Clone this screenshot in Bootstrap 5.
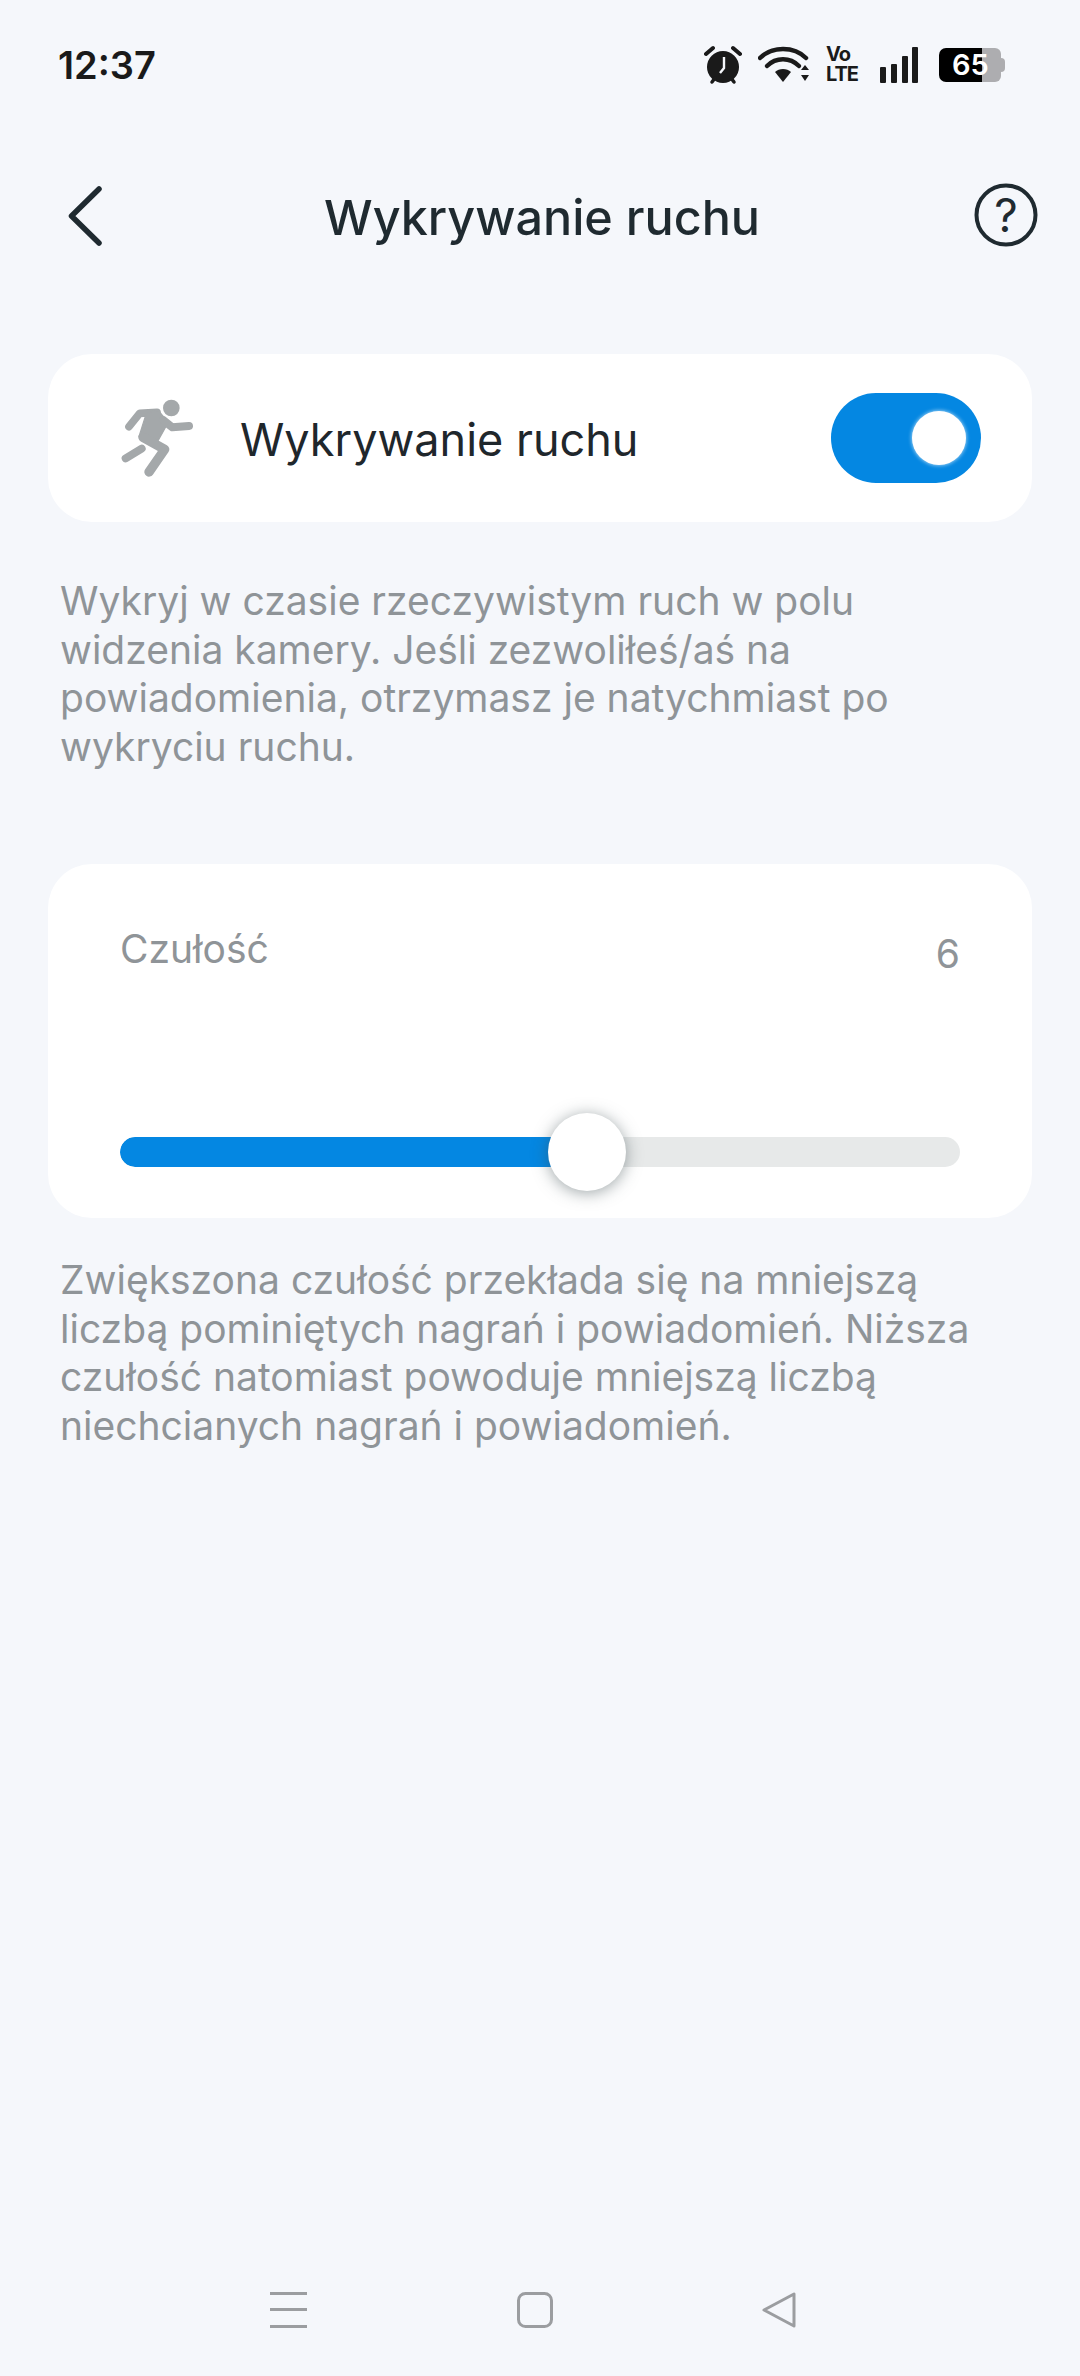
<!DOCTYPE html>
<html lang="pl">
<head>
<meta charset="utf-8">
<title>Wykrywanie ruchu</title>
<link href="https://cdn.jsdelivr.net/npm/bootstrap@5.3.0/dist/css/bootstrap.min.css" rel="stylesheet">
<style>
html,body{width:1080px;height:2376px;overflow:hidden}
body{background:#f5f7fb;font-family:Inter,"Liberation Sans",sans-serif;color:#1f272c}
.screen{height:2376px}
.status-row{height:50px;margin-top:40px;padding:0 0 0 58px}
.clock{font-size:38px;font-weight:600;line-height:50px;color:#1a1a1a}
.status-icons{margin-left:auto;padding-right:75px}
.ic-wifi{margin-left:16px}
.volte{margin-left:16px;width:34px;font-weight:700;color:#1a1a1a;font-size:20px;line-height:20px;letter-spacing:-1px}
.volte span{display:block;line-height:19px;margin-bottom:1px}
.ic-signal{margin-left:20px}
.batt{width:66px;height:34px;position:relative;margin-left:21px}
.batt-num{position:absolute;left:13px;top:0;line-height:34px;font-size:29px;font-weight:600;color:#fff}
.title-row{height:64px;margin-top:93px;position:relative;padding:0 42px 0 64px}
.page-title{font-size:48.5px;line-height:64px;font-weight:450;margin:0;color:#1f2a30;position:absolute;left:324px;top:3px}
.panel{margin:0 48px;background:#fff;border-radius:44px}
.panel-top{margin-top:107px;height:168px;padding:0 51px 0 72px}
.panel-label{font-size:45px;line-height:56px;margin-left:47px;margin-top:3px;color:#1f272c}
.toggle-track{width:150px;height:90px;border-radius:45px;background:#0487e2;margin-left:auto;padding-right:15px}
.toggle-knob{width:54px;height:54px;border-radius:50%;background:#fff;box-shadow:0 0 4px rgba(255,255,255,.8)}
.note{margin:0 0 0 60px;width:980px;font-size:39px;line-height:48.5px;color:#8f9498}
.note-first{margin-top:55px}
.note-second{margin-top:38px}
.panel-slider{margin-top:93px;height:354px;padding:60px 72px 0}
.slider-head{font-size:39px;line-height:50px;color:#8f9498;height:50px}
.slider-val{margin-top:5px}
.slider-wrap{margin-top:163px;position:relative}
.slider-bar{height:30px;border-radius:15px;background:#e7e9e9}
.slider-bar .progress-bar{background:#0487e2;border-radius:15px 0 0 15px}
.slider-thumb{position:absolute;left:428px;top:-24px;width:78px;height:78px;border-radius:50%;background:#fff;box-shadow:0 2px 16px rgba(60,75,80,.5)}
.bottom-nav{margin-top:auto;height:36px;margin-bottom:48px}
.nav-a{margin-left:270px}
.nav-b{margin-left:210px}
.nav-c{margin-left:208px}
</style>
</head>
<body>
<div class="screen d-flex flex-column">
  <div class="status-row d-flex align-items-center">
    <span class="clock">12:37</span>
    <div class="status-icons d-flex align-items-center">
      <svg width="38" height="40" viewBox="0 0 38 40"><circle cx="19" cy="22" r="16" fill="#1a1a1a"/><path d="M2 9 9 3M36 9 29 3" stroke="#1a1a1a" stroke-width="4" stroke-linecap="round"/><path d="M8 37l3-4M30 37l-3-4" stroke="#1a1a1a" stroke-width="3.5" stroke-linecap="round"/><path d="M20 12v11l-4 5" fill="none" stroke="#f5f7fb" stroke-width="2.4"/></svg>
      <svg class="ic-wifi" width="52" height="38" viewBox="0 0 52 38"><path d="M2 12C14 0 36 0 48 12" fill="none" stroke="#1a1a1a" stroke-width="4.5" stroke-linecap="round"/><path d="M9 20C18 11 32 11 41 20" fill="none" stroke="#1a1a1a" stroke-width="4.5" stroke-linecap="round"/><path d="M17 26C21 22 29 22 33 26L25 36Z" fill="#1a1a1a"/><path d="M43 24h8l-4-5zM43 29h8l-4 6z" fill="#1a1a1a"/></svg>
      <div class="volte"><span>Vo</span><span>LTE</span></div>
      <svg class="ic-signal" width="38" height="36" viewBox="0 0 38 36"><g fill="#1a1a1a"><rect x="0" y="20" width="6" height="16" rx="1"/><rect x="11" y="17" width="6" height="19" rx="1"/><rect x="22" y="9" width="6" height="27" rx="1"/><rect x="32" y="0" width="6" height="36" rx="1"/></g></svg>
      <div class="batt">
        <svg width="66" height="34" viewBox="0 0 66 34"><path d="M43 0H56a6 6 0 0 1 6 6v22a6 6 0 0 1-6 6H43Z" fill="#adadb0"/><path d="M62 10a4 4 0 0 1 4 4v6a4 4 0 0 1-4 4Z" fill="#adadb0"/><path d="M43 0H7a7 7 0 0 0-7 7v20a7 7 0 0 0 7 7H43Z" fill="#000"/></svg>
        <span class="batt-num">65</span>
      </div>
    </div>
  </div>

  <div class="title-row d-flex align-items-center justify-content-between">
    <svg width="38" height="64" viewBox="0 0 38 64"><path d="M35 6 7.500 33 35 60" fill="none" stroke="#1f2a30" stroke-width="5.500" stroke-linecap="round" stroke-linejoin="round"/></svg>
    <h1 class="page-title">Wykrywanie ruchu</h1>
    <svg width="64" height="64" viewBox="0 0 64 64"><circle cx="32" cy="32" r="29.500" fill="none" stroke="#1f2a30" stroke-width="4"/><text x="32" y="49" text-anchor="middle" font-family="Inter,sans-serif" font-size="46" font-weight="400" fill="#1f2a30">?</text></svg>
  </div>

  <div class="panel panel-top d-flex align-items-center">
    <svg width="73" height="80" viewBox="61 54 219 240"><circle cx="215" cy="84" r="25" fill="#a4a8aa"/><path d="M88 140 120 100 172 97" fill="none" stroke="#a4a8aa" stroke-width="23" stroke-linecap="round" stroke-linejoin="round"/><path d="M140 100 175 90 205 128 175 182 118 170Z" fill="#a4a8aa" stroke="#a4a8aa" stroke-width="4" stroke-linejoin="round"/><path d="M190 120 218 142 268 138" fill="none" stroke="#a4a8aa" stroke-width="24" stroke-linecap="round" stroke-linejoin="round"/><path d="M130 172 195 208 148 276" fill="none" stroke="#a4a8aa" stroke-width="28" stroke-linecap="round" stroke-linejoin="round"/><path d="M78 235 126 206" fill="none" stroke="#a4a8aa" stroke-width="24" stroke-linecap="round"/></svg>
    <span class="panel-label">Wykrywanie ruchu</span>
    <div class="toggle-track d-flex align-items-center justify-content-end"><div class="toggle-knob"></div></div>
  </div>

  <p class="note note-first">Wykryj w czasie rzeczywistym ruch w polu<br>widzenia kamery. Jeśli zezwoliłeś/aś na<br>powiadomienia, otrzymasz je natychmiast po<br>wykryciu ruchu.</p>

  <div class="panel panel-slider">
    <div class="slider-head d-flex justify-content-between"><span>Czułość</span><span class="slider-val">6</span></div>
    <div class="slider-wrap">
      <div class="progress slider-bar"><div class="progress-bar" style="width:55%"></div></div>
      <div class="slider-thumb"></div>
    </div>
  </div>

  <p class="note note-second">Zwiększona czułość przekłada się na mniejszą<br>liczbą pominiętych nagrań i powiadomień. Niższa<br>czułość natomiast powoduje mniejszą liczbą<br>niechcianych nagrań i powiadomień.</p>

  <div class="bottom-nav d-flex align-items-center">
    <svg class="nav-a" width="37" height="36" viewBox="0 0 37 36"><g fill="#9b9da0"><rect y="0" width="37" height="3"/><rect y="16" width="37" height="3"/><rect y="33" width="37" height="3"/></g></svg>
    <svg class="nav-b" width="36" height="36" viewBox="0 0 36 36"><rect x="1.500" y="1.500" width="33" height="33" rx="7" fill="none" stroke="#9b9da0" stroke-width="3"/></svg>
    <svg class="nav-c" width="36" height="36" viewBox="0 0 36 36"><path d="M3 18 33 2V34Z" fill="none" stroke="#9b9da0" stroke-width="3" stroke-linejoin="round"/></svg>
  </div>
</div>
<script src="https://cdn.jsdelivr.net/npm/bootstrap@5.3.0/dist/js/bootstrap.bundle.min.js"></script>
</body>
</html>
